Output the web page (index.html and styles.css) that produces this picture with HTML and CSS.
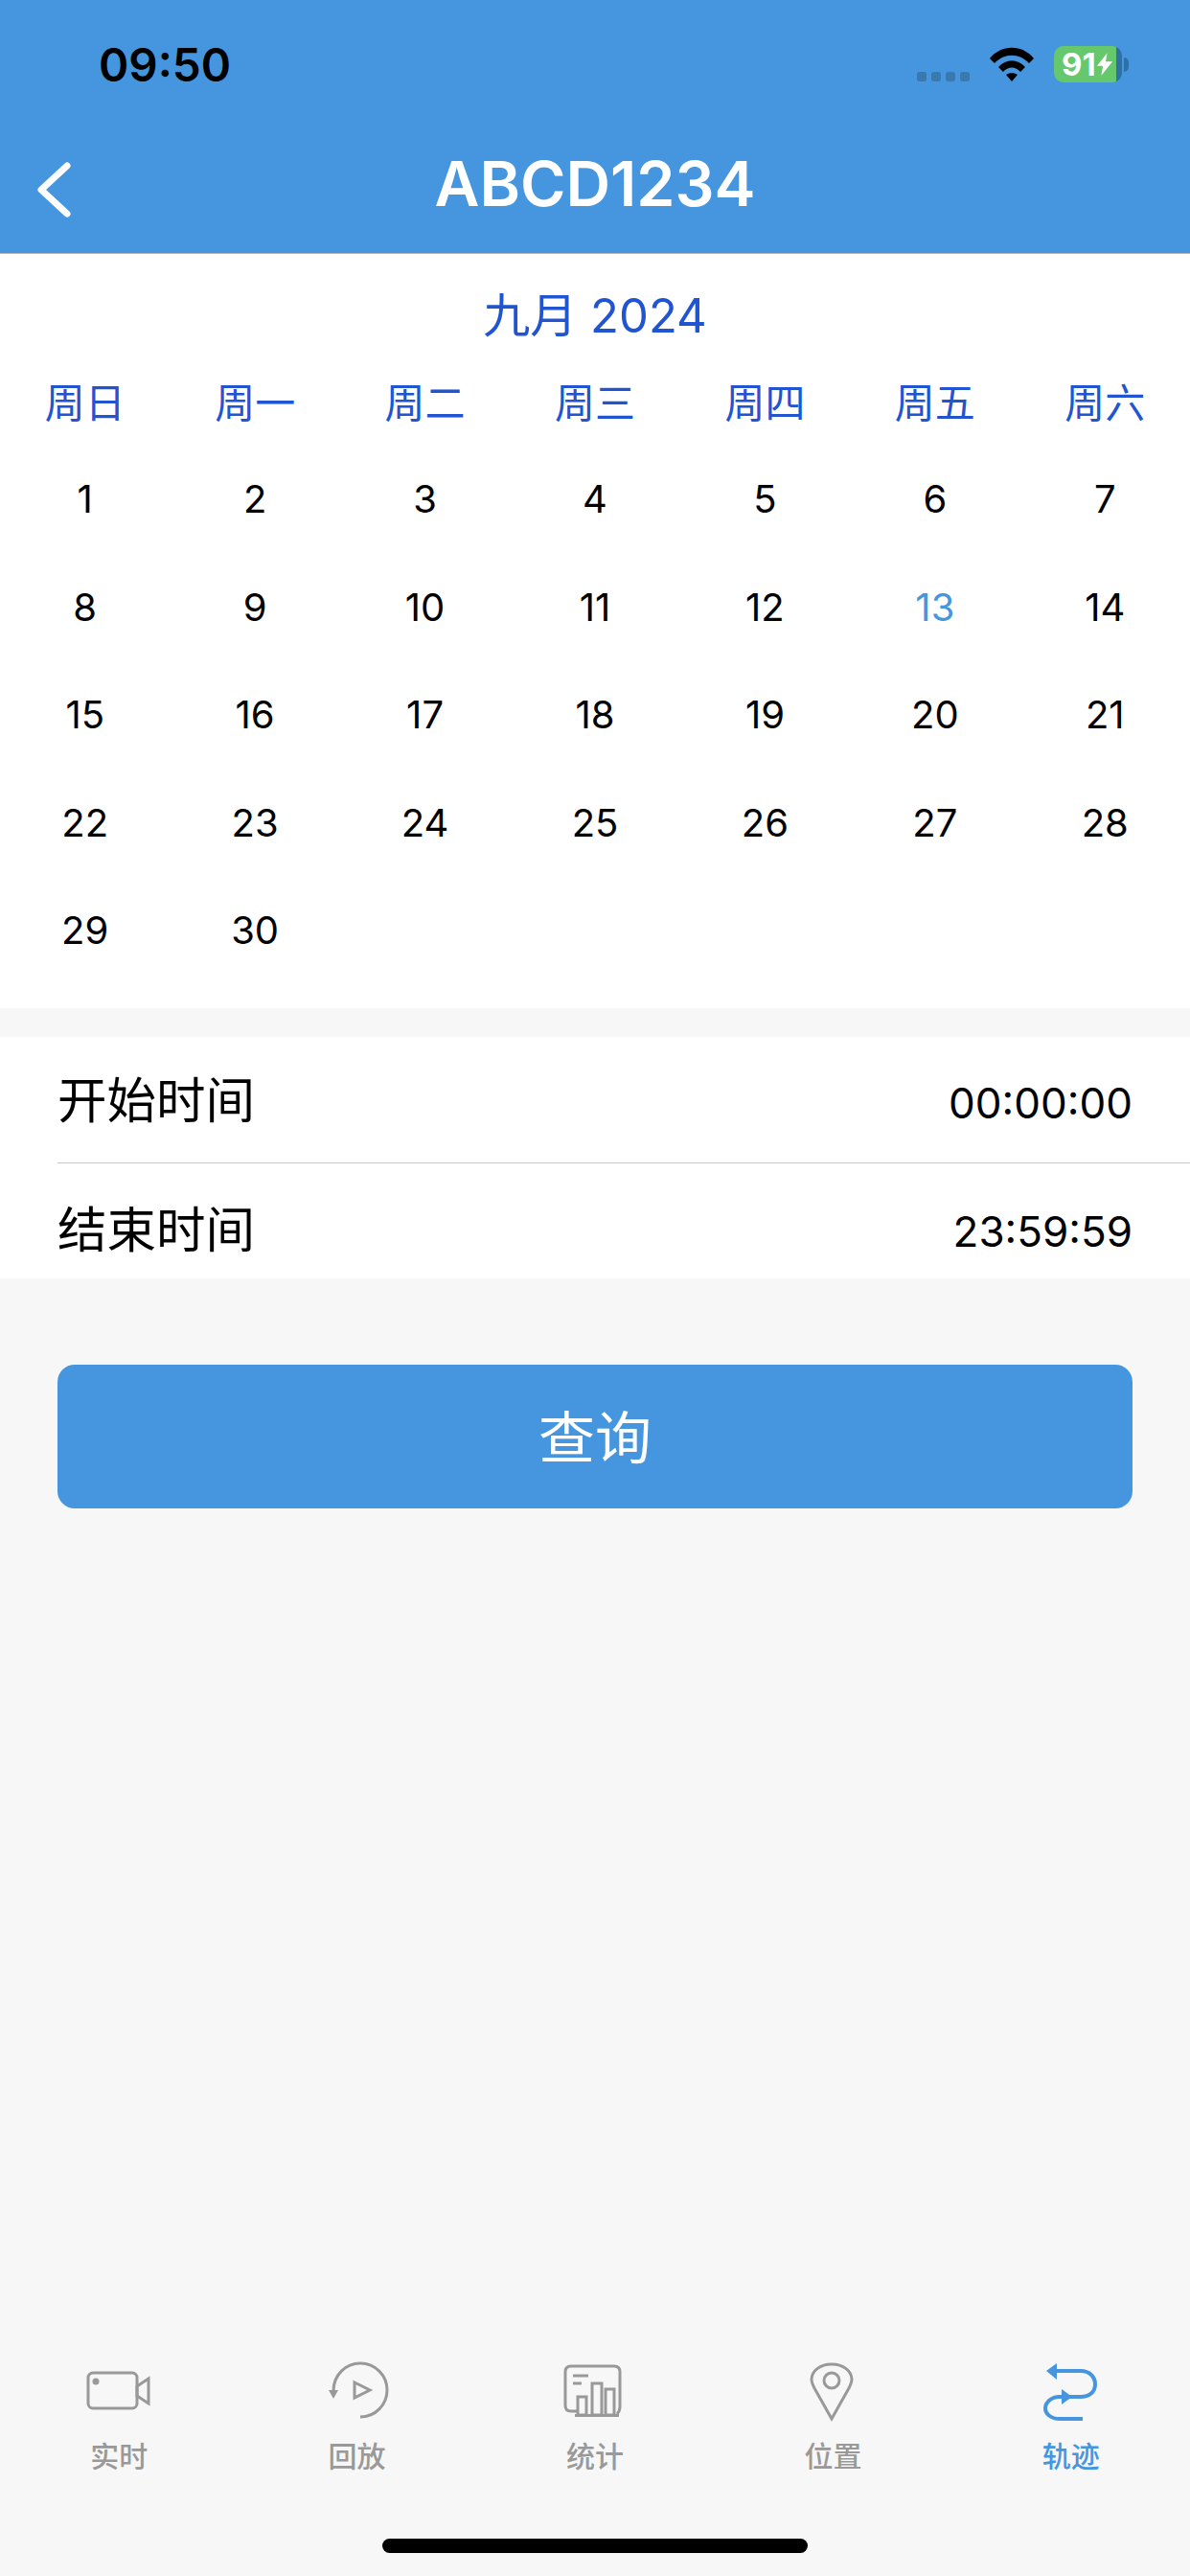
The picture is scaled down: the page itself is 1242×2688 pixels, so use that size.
FILE: index.html
```html
<!DOCTYPE html>
<html lang="zh">

<head>
    <meta charset="UTF-8">
    <meta name="viewport" content="width=device-width, initial-scale=1.0">
    <title>ABCD1234</title>
    <link rel="stylesheet" href="styles.css">
</head>

<body>
    <header class="top">
        <div class="status">
            <span class="clock">09:50</span>
            <div class="status-icons">
                <div class="signal"><i></i><i></i><i></i><i></i></div>
                <svg class="wifi" width="48" height="36" viewBox="0 0 48 36">
                    <path d="M1 12C13 -3 35 -3 47 12L42 17C32 6 16 6 6 17Z" />
                    <path d="M10 21C18 12 30 12 38 21L33 26C28 20 20 20 15 26Z" />
                    <path d="M18 29C21 26.500 27 26.500 30 29L24 36Z" />
                </svg>
                <div class="battery">
                    <div class="battery-body">
                        <span class="battery-num">91</span>
                        <svg width="18" height="26" viewBox="0 0 20 26">
                            <path d="M13 0L1 15H8L6 26L19 10H11Z" fill="#fff" />
                        </svg>
                    </div>
                    <div class="battery-cap"></div>
                </div>
            </div>
        </div>
        <div class="nav">
            <svg class="back" width="36" height="60" viewBox="0 0 36 60">
                <path d="M32 5L5 30L32 55" />
            </svg>
            <h1 class="title">ABCD1234</h1>
        </div>
    </header>

    <section class="calendar">
        <div class="month">九月 2024</div>
        <div class="weekdays">
            <span>周日</span><span>周一</span><span>周二</span><span>周三</span><span>周四</span><span>周五</span><span>周六</span>
        </div>
        <div class="days">
            <span>1</span><span>2</span><span>3</span><span>4</span><span>5</span><span>6</span><span>7</span>
            <span>8</span><span>9</span><span>10</span><span>11</span><span>12</span><span class="today">13</span><span>14</span>
            <span>15</span><span>16</span><span>17</span><span>18</span><span>19</span><span>20</span><span>21</span>
            <span>22</span><span>23</span><span>24</span><span>25</span><span>26</span><span>27</span><span>28</span>
            <span>29</span><span>30</span>
        </div>
    </section>

    <section class="times">
        <div class="time-row start">
            <span class="time-label">开始时间</span>
            <span class="time-value">00:00:00</span>
        </div>
        <div class="time-row end">
            <span class="time-label">结束时间</span>
            <span class="time-value">23:59:59</span>
        </div>
    </section>

    <button class="query" type="button">查询</button>

    <nav class="tabs">
        <div class="tab">
            <svg width="80" height="66" viewBox="0 0 80 66">
                <rect x="8" y="14" width="51" height="37" rx="5" />
                <circle cx="16" cy="23" r="3.500" class="solid" />
                <path d="M59 28L71 20V46L59 38Z" />
            </svg>
            <span>实时</span>
        </div>
        <div class="tab">
            <svg width="80" height="66" viewBox="0 0 80 66">
                <path d="M15 33C15 16 28 4 43 4C59 4 71 17 71 32C71 47 59 60 43 60" />
                <path d="M10 32H20L15 41Z" class="solid" />
                <path d="M37 24L53 32L37 40Z" />
            </svg>
            <span>回放</span>
        </div>
        <div class="tab">
            <svg width="80" height="66" viewBox="0 0 80 66">
                <path d="M21 54H15C11 54 9 52 9 48V13C9 9 11 7 15 7H60C64 7 66 9 66 13V49C66 53 65 55 63 57" />
                <path d="M19 58.500H65" />
                <path d="M17 17H33M17 25H26" />
                <rect x="22" y="39" width="9" height="19" />
                <rect x="37" y="25" width="10" height="33" />
                <rect x="51" y="31" width="9" height="27" />
            </svg>
            <span>统计</span>
        </div>
        <div class="tab">
            <svg width="80" height="66" viewBox="0 0 80 66">
                <path d="M39 62L21 30C19 26 18 24 18 21C18 12 27 5 39 5C51 5 60 12 60 21C60 24 59 26 57 30Z" />
                <circle cx="39" cy="22" r="8" />
            </svg>
            <span>位置</span>
        </div>
        <div class="tab active">
            <svg width="80" height="66" viewBox="0 0 80 66">
                <path d="M25 12H50C59 12 65 18 65 26C65 34 59 39 50 39H28C19 39 13 45 13 51C13 57 19 62 28 62H52" />
                <path d="M14 12L25 4V21Z" class="solid" />
                <path d="M41 39L30 31V47Z" class="solid" />
            </svg>
            <span>轨迹</span>
        </div>
    </nav>

    <div class="home-bar"></div>
</body>

</html>
```

FILE: styles.css
```css
/* Page */
html,
body {
    margin: 0;
    padding: 0;
}

body {
    width: 1242px;
    height: 2688px;
    background-color: #f7f7f7;
    font-family: Inter, "Noto Sans CJK SC", sans-serif;
    display: flex;
    flex-direction: column;
    overflow: hidden;
}

/* Blue header */
.top {
    height: 264px;
    background-color: #4596df;
    border-bottom: 1px solid #b8b8b8;
    flex-shrink: 0;
}

.status {
    height: 132px;
    display: flex;
    justify-content: space-between;
    align-items: center;
    padding: 2px 64px 0 103px;
    box-sizing: border-box;
}

.clock {
    font-size: 47.500px;
    font-weight: 600;
    color: #000;
}

.status-icons {
    display: flex;
    align-items: center;
    gap: 20px;
}

.signal {
    display: flex;
    gap: 5px;
    margin-top: 26px;
}

.signal i {
    width: 10px;
    height: 10px;
    border-radius: 3px;
    background-color: #3979ae;
}

.wifi {
    fill: #000;
}

.battery {
    display: flex;
    align-items: center;
    gap: 2px;
}

.battery-body {
    width: 71px;
    height: 38px;
    border-radius: 10px;
    background: linear-gradient(to right, #66c86c 92%, #2f71a5 92%);
    display: flex;
    align-items: center;
    padding-left: 8px;
    box-sizing: border-box;
}

.battery-num {
    font-size: 33px;
    font-weight: 700;
    color: #fff;
}

.battery-cap {
    width: 5px;
    height: 15px;
    border-radius: 0 5px 5px 0;
    background-color: #2f71a5;
}

.nav {
    height: 132px;
    display: flex;
    justify-content: center;
    align-items: center;
    padding-bottom: 12px;
    box-sizing: border-box;
    position: relative;
}

.back {
    position: absolute;
    left: 38px;
    top: 36px;
    fill: none;
    stroke: #fff;
    stroke-width: 7;
    stroke-linecap: round;
    stroke-linejoin: round;
}

.title {
    margin: 0;
    font-size: 64.500px;
    font-weight: 600;
    color: #fff;
}

/* Calendar */
.calendar {
    height: 787px;
    background-color: #fff;
    flex-shrink: 0;
}

.month {
    height: 76px;
    padding-top: 27px;
    text-align: center;
    line-height: 76px;
    font-size: 49px;
    color: #2154d0;
}

.weekdays,
.days {
    display: grid;
    grid-template-columns: repeat(7, 1fr);
    text-align: center;
}

.weekdays {
    padding-top: 8px;
    height: 89px;
    line-height: 89px;
    font-size: 42px;
    color: #2154d0;
}

.days {
    grid-auto-rows: 112.500px;
    line-height: 112.500px;
    font-size: 40px;
    color: #000;
}

.today {
    color: #4596df;
}

/* Start and end time */
.times {
    margin-top: 30px;
    height: 252px;
    background-color: #fff;
    padding-left: 60px;
    flex-shrink: 0;
}

.time-row {
    display: flex;
    justify-content: space-between;
    align-items: center;
    padding-right: 60px;
    box-sizing: border-box;
}

.start {
    height: 132px;
    padding-bottom: 6px;
    border-bottom: 1px solid #c8c8c8;
}

.end {
    height: 120px;
    padding-top: 10px;
}

.time-label {
    font-size: 51.500px;
    color: #000;
}

.time-value {
    margin-top: 12px;
    font-size: 44px;
    color: #000;
}

/* Query button */
.query {
    margin: 90px 60px 0;
    height: 150px;
    padding: 0 0 6px;
    flex-shrink: 0;
    background-color: #4596df;
    color: #fff;
    border: none;
    border-radius: 18px;
    font-family: inherit;
    font-size: 59px;
}

/* Bottom tabs */
.tabs {
    margin-top: 888px;
    display: grid;
    grid-template-columns: repeat(5, 1fr);
    flex-shrink: 0;
}

.tab {
    display: flex;
    flex-direction: column;
    align-items: center;
    font-size: 30px;
    font-weight: 500;
    line-height: 40px;
    color: #999;
}

.tab svg {
    margin-bottom: 15px;
    fill: none;
    stroke: #999;
    stroke-width: 3;
}

.tab .solid {
    fill: #999;
    stroke: none;
}

.active {
    color: #4596df;
}

.active svg {
    stroke: #4596df;
    stroke-width: 4;
}

.active .solid {
    fill: #4596df;
}

.home-bar {
    width: 444px;
    height: 15px;
    margin: 66px auto 0;
    border-radius: 8px;
    background-color: #000;
    flex-shrink: 0;
}
```
